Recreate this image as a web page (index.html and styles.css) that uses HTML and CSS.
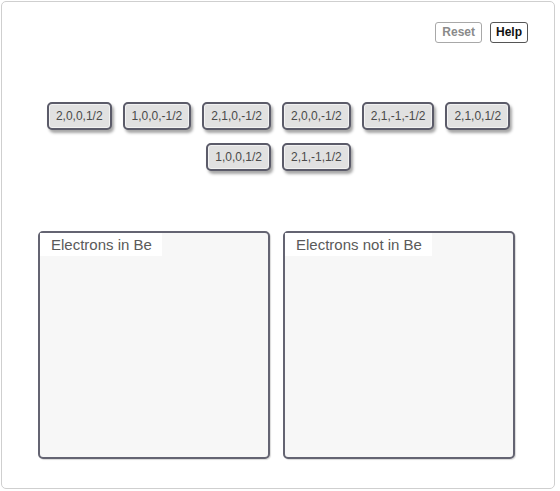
FILE: index.html
```html
<!DOCTYPE html>
<html>
<head>
<meta charset="utf-8">
<link rel="stylesheet" href="styles.css">
</head>
<body>
<div class="frame">
  <div class="toolbar">
    <button class="btn btn-reset">Reset</button>
    <button class="btn btn-help">Help</button>
  </div>
  <div class="chips">
    <div class="chip">2,0,0,1/2</div>
    <div class="chip">1,0,0,-1/2</div>
    <div class="chip">2,1,0,-1/2</div>
    <div class="chip">2,0,0,-1/2</div>
    <div class="chip">2,1,-1,-1/2</div>
    <div class="chip">2,1,0,1/2</div>
    <div class="chip">1,0,0,1/2</div>
    <div class="chip">2,1,-1,1/2</div>
  </div>
  <div class="zones">
    <div class="zone"><div class="zone-label">Electrons in Be</div></div>
    <div class="zone"><div class="zone-label">Electrons not in Be</div></div>
  </div>
</div>
</body>
</html>
```
FILE: styles.css
```css
html, body {
  margin: 0;
  padding: 0;
  background: #fff;
  font-family: "Liberation Sans", Arial, sans-serif;
}
.frame {
  margin: 1px 0 0 1px;
  width: 554px;
  height: 488px;
  box-sizing: border-box;
  border: 1px solid #cfcfcf;
  border-radius: 5px;
  padding-top: 20px;
}
.toolbar {
  display: flex;
  justify-content: flex-end;
  gap: 8px;
  padding-right: 26px;
}
.btn {
  font-family: "Liberation Sans", Arial, sans-serif;
  font-size: 12px;
  font-weight: bold;
  background: #fff;
  border-radius: 3px;
  height: 21px;
  padding: 0 5px;
  line-height: 17px;
}
.btn-reset {
  color: #8a8a8a;
  border: 1px solid #a8a8a8;
  padding: 0 6px;
}
.btn-help {
  color: #111;
  border: 1px solid #555;
}
.chips {
  margin-top: 59px;
  display: flex;
  flex-wrap: wrap;
  justify-content: center;
  column-gap: 11px;
  row-gap: 13px;
  padding: 0 40px 0 41px;
}
.chip {
  box-sizing: border-box;
  height: 28px;
  padding: 0 7px;
  border: 2px solid #5b5b69;
  border-radius: 5px;
  background: #e1e1e1;
  color: #4a4a4a;
  font-size: 12px;
  line-height: 24px;
  box-shadow: inset 0 0 0 1px #f2f2f2, 2px 3px 3px rgba(0,0,0,0.35);
}
.zones {
  margin-top: 60px;
  padding-left: 36px;
  display: flex;
  gap: 13px;
}
.zone {
  box-sizing: border-box;
  width: 232px;
  height: 228px;
  border: 2px solid #646472;
  border-radius: 5px;
  background: #f7f7f7;
  box-shadow: 1px 1px 1px rgba(0,0,0,0.15);
}
.zone-label {
  display: inline-block;
  background: #fff;
  color: #5a5a5a;
  font-size: 15px;
  line-height: 23px;
  padding: 0 10px 0 11px;
}
```
